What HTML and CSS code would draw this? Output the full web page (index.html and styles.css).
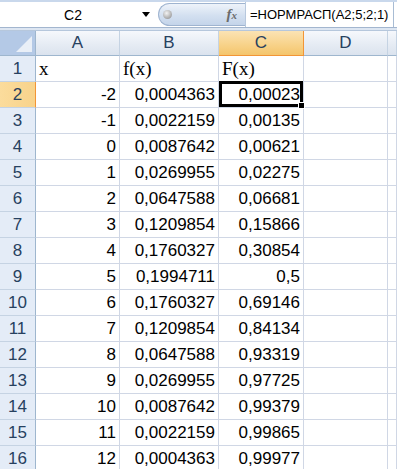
FILE: index.html
```html
<!DOCTYPE html>
<html lang="ru">
<head>
    <meta charset="UTF-8">
    <title>НОРМРАСП</title>
    <link rel="stylesheet" href="styles.css">
</head>
<body>
    <div class="formula-bar">
        <div class="name-box">
            <span class="name">C2</span>
            <svg class="drop" width="8" height="5" viewBox="0 0 8 5"><path d="M0 0H8L4 5Z" fill="#000"/></svg>
        </div>
        <div class="pill">
            <span class="knob"></span>
            <span class="fx"><i>f</i><i class="sub">x</i></span>
        </div>
        <div class="formula">=НОРМРАСП(A2;5;2;1)</div>
    </div>
    <div class="band"></div>

    <div class="sheet">
        <div class="corner"><span class="tri"></span></div>
        <div class="hd">A</div>
        <div class="hd">B</div>
        <div class="hd on">C</div>
        <div class="hd">D</div>
        <div class="hd"></div>

        <div class="rh">1</div><div class="c t">x</div><div class="c t">f(x)</div><div class="c t">F(x)</div><div class="c"></div><div class="c"></div>
        <div class="rh on">2</div><div class="c r">-2</div><div class="c r">0,0004363</div><div class="c r sel">0,00023<span class="box"></span></div><div class="c"></div><div class="c"></div>
        <div class="rh">3</div><div class="c r">-1</div><div class="c r">0,0022159</div><div class="c r">0,00135</div><div class="c"></div><div class="c"></div>
        <div class="rh">4</div><div class="c r">0</div><div class="c r">0,0087642</div><div class="c r">0,00621</div><div class="c"></div><div class="c"></div>
        <div class="rh">5</div><div class="c r">1</div><div class="c r">0,0269955</div><div class="c r">0,02275</div><div class="c"></div><div class="c"></div>
        <div class="rh">6</div><div class="c r">2</div><div class="c r">0,0647588</div><div class="c r">0,06681</div><div class="c"></div><div class="c"></div>
        <div class="rh">7</div><div class="c r">3</div><div class="c r">0,1209854</div><div class="c r">0,15866</div><div class="c"></div><div class="c"></div>
        <div class="rh">8</div><div class="c r">4</div><div class="c r">0,1760327</div><div class="c r">0,30854</div><div class="c"></div><div class="c"></div>
        <div class="rh">9</div><div class="c r">5</div><div class="c r">0,1994711</div><div class="c r">0,5</div><div class="c"></div><div class="c"></div>
        <div class="rh">10</div><div class="c r">6</div><div class="c r">0,1760327</div><div class="c r">0,69146</div><div class="c"></div><div class="c"></div>
        <div class="rh">11</div><div class="c r">7</div><div class="c r">0,1209854</div><div class="c r">0,84134</div><div class="c"></div><div class="c"></div>
        <div class="rh">12</div><div class="c r">8</div><div class="c r">0,0647588</div><div class="c r">0,93319</div><div class="c"></div><div class="c"></div>
        <div class="rh">13</div><div class="c r">9</div><div class="c r">0,0269955</div><div class="c r">0,97725</div><div class="c"></div><div class="c"></div>
        <div class="rh">14</div><div class="c r">10</div><div class="c r">0,0087642</div><div class="c r">0,99379</div><div class="c"></div><div class="c"></div>
        <div class="rh">15</div><div class="c r">11</div><div class="c r">0,0022159</div><div class="c r">0,99865</div><div class="c"></div><div class="c"></div>
        <div class="rh">16</div><div class="c r">12</div><div class="c r">0,0004363</div><div class="c r">0,99977</div><div class="c"></div><div class="c"></div>
    </div>
</body>
</html>
```

FILE: styles.css
```css
body {
    margin: 0;
    overflow: hidden;
    background: #fff;
    font-family: "Liberation Sans", Arial, sans-serif;
}

.formula-bar {
    display: flex;
    height: 28px;
    box-sizing: border-box;
    border-top: 2px solid #c9d8ec;
    border-bottom: 1px solid #a3b6cf;
    background: #fff;
}

.name-box {
    width: 156px;
    flex: none;
    display: flex;
    align-items: center;
}

.name {
    flex: 1;
    text-align: center;
    font-size: 14px;
    color: #000;
    padding-left: 4px;
}

.drop {
    margin-right: 6px;
}

.pill {
    flex: none;
    box-sizing: border-box;
    width: 87px;
    margin: 1px 0 1px 2px;
    border: 1px solid #9fb4d0;
    border-right: none;
    border-radius: 12px 0 0 12px;
    background: linear-gradient(#eef3fa, #d3e0f0 55%, #c4d4ea);
    display: flex;
    align-items: center;
    justify-content: space-between;
    padding: 0 8px 0 4px;
}

.knob {
    width: 9px;
    height: 9px;
    border-radius: 50%;
    background: radial-gradient(circle at 40% 35%, #f4f4f4, #9a9a9a 80%);
}

.fx {
    font-family: "Liberation Serif", serif;
    color: #6b6b6b;
    font-size: 15px;
    font-weight: bold;
}

.fx .sub {
    font-size: 11px;
}

.formula {
    flex: 1;
    border-left: 1px solid #b7c8dd;
    border-right: 1px solid #a8bcd4;
    margin-right: 3px;
    font-size: 13px;
    display: flex;
    align-items: center;
    padding-left: 4px;
    color: #000;
    white-space: nowrap;
}

.band {
    height: 2px;
    background: #dde6f2;
    border-bottom: 1px solid #b6c7dc;
}

.sheet {
    display: grid;
    grid-template-columns: 36px 84px 99px 85px 84px 1fr;
    grid-template-rows: 25px repeat(16, 26px);
}

.sheet > div {
    box-sizing: border-box;
}

.corner {
    background: #b4c9e6;
    border-right: 1px solid #9eb6ce;
    border-bottom: 1px solid #9eb6ce;
    position: relative;
}

.tri {
    position: absolute;
    right: 3px;
    bottom: 3px;
    width: 0;
    height: 0;
    border-left: 16px solid transparent;
    border-bottom: 16px solid #e9eff7;
}

.hd {
    background: linear-gradient(#f6f8fc, #e6ecf4 55%, #dbe3ee);
    border-right: 1px solid #c5d3e3;
    border-bottom: 1px solid #9eb6ce;
    display: flex;
    align-items: center;
    justify-content: center;
    font-size: 17px;
    color: #27415f;
}

.hd.on {
    background: linear-gradient(#fbe3b4, #f8d38b 55%, #f4c56c);
    border-right: 1px solid #f29536;
    border-bottom: 1px solid #f29536;
}

.rh {
    background: #e4ecf7;
    border-right: 1px solid #9eb6ce;
    border-bottom: 1px solid #c5d3e3;
    display: flex;
    align-items: center;
    justify-content: center;
    font-size: 17px;
    color: #27415f;
}

.rh.on {
    background: linear-gradient(90deg, #fbdc9c, #f8d38b);
    border-right: 1px solid #f29536;
}

.c {
    border-right: 1px solid #d0d7e5;
    border-bottom: 1px solid #d0d7e5;
    display: flex;
    align-items: center;
    padding: 0 3px;
    font-size: 17px;
    color: #000;
}

.c.r {
    justify-content: flex-end;
}

.c.t {
    font-family: "Liberation Serif", serif;
    font-size: 19px;
}

.sel {
    position: relative;
}

.box {
    position: absolute;
    top: -1px;
    left: 0;
    right: 0;
    bottom: 0;
    border: 3px solid #000;
}

.box::after {
    content: "";
    position: absolute;
    right: -5px;
    bottom: -5px;
    width: 5px;
    height: 5px;
    background: #000;
    border: 1px solid #fff;
}
```
